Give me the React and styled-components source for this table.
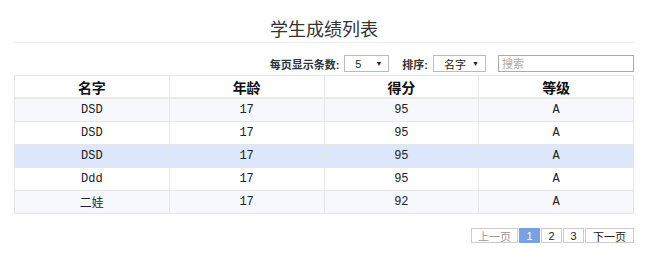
import React, { useState } from 'react';
import styled, { createGlobalStyle } from 'styled-components';

const GlobalStyle = createGlobalStyle`
    body {
        margin: 0;
        background: #fff;
        font-family: "Liberation Sans", "Noto Sans CJK SC", sans-serif;
        color: #333;
    }
`;

const Page = styled.div`
    width: 620px;
    padding: 0 16px 0 14px;
`;

const Title = styled.h2`
    margin: 0;
    padding-top: 19px;
    height: 23px;
    line-height: 23px;
    text-align: center;
    font-size: 18px;
    font-weight: normal;
    color: #333;
    border-bottom: 1px solid #eee;
`;

const Toolbar = styled.div`
    display: flex;
    justify-content: flex-end;
    align-items: center;
    height: 17px;
    margin-top: 12px;
    font-size: 11px;
    font-weight: bold;
    color: #333;
`;

const Label = styled.span`
    margin-right: 5px;
    margin-left: ${props => props.gap || 0}px;
`;

const Select = styled.div`
    box-sizing: border-box;
    width: ${props => props.width}px;
    height: 17px;
    border: 1px solid #bbb;
    display: flex;
    align-items: center;
    justify-content: space-between;
    padding: 0 6px 0 ${props => props.pl}px;
    font-weight: normal;
    font-size: 11px;
    color: #222;
    &::after {
        content: '▼';
        font-size: 7px;
    }
`;

const Search = styled.input`
    box-sizing: border-box;
    width: 136px;
    height: 17px;
    margin-left: 12px;
    border: 1px solid #aaa;
    padding: 0 3px;
    font-size: 11px;
    font-family: inherit;
    &::placeholder {
        color: #aaa;
    }
`;

const Table = styled.table`
    width: 620px;
    margin-top: 3px;
    border-collapse: collapse;
    border: 1px solid #e6e6e6;
    table-layout: fixed;
`;

const Th = styled.th`
    height: 21px;
    border: 1px solid #e6e6e6;
    border-bottom: 2px solid #e9e9e9;
    font-size: 14px;
    font-weight: bold;
    color: #111;
    padding: 0;
`;

const Row = styled.tr`
    background: ${props => (props.hover ? '#dde7fb' : props.odd ? '#f6f8fd' : '#fff')};
`;

const Td = styled.td`
    height: 22px;
    border: 1px solid #e6e6e6;
    text-align: center;
    padding: 0;
    font-family: "Liberation Mono", "Noto Sans CJK SC", monospace;
    font-size: 12px;
    color: #222;
`;

const Pager = styled.div`
    display: flex;
    justify-content: flex-end;
    margin-top: 14px;
    gap: 1px;
`;

const PageButton = styled.span`
    box-sizing: border-box;
    height: 15px;
    width: ${props => props.w}px;
    border: 1px solid #ccc;
    display: flex;
    align-items: center;
    justify-content: center;
    font-size: 11px;
    color: ${props => (props.active ? '#fff' : props.disabled ? '#999' : '#222')};
    background: ${props => (props.active ? '#7aa0e2' : '#fff')};
    border-color: ${props => (props.active ? '#7aa0e2' : '#ccc')};
`;

const rows = [
    { name: 'DSD', age: 17, score: 95, grade: 'A' },
    { name: 'DSD', age: 17, score: 95, grade: 'A' },
    { name: 'DSD', age: 17, score: 95, grade: 'A' },
    { name: 'Ddd', age: 17, score: 95, grade: 'A' },
    { name: '二娃', age: 17, score: 92, grade: 'A' },
];

export default function App() {
    const [hovered] = useState(2);
    return (
        <Page>
            <GlobalStyle />
            <Title>学生成绩列表</Title>
            <Toolbar>
                <Label>每页显示条数:</Label>
                <Select width={45} pl={10}>5</Select>
                <Label gap={13}>排序:</Label>
                <Select width={53} pl={10}>名字</Select>
                <Search placeholder="搜索" />
            </Toolbar>
            <Table>
                <thead>
                    <tr>
                        <Th>名字</Th>
                        <Th>年龄</Th>
                        <Th>得分</Th>
                        <Th>等级</Th>
                    </tr>
                </thead>
                <tbody>
                    {rows.map((r, i) => (
                        <Row key={i} odd={i % 2 === 0} hover={i === hovered}>
                            <Td>{r.name}</Td>
                            <Td>{r.age}</Td>
                            <Td>{r.score}</Td>
                            <Td>{r.grade}</Td>
                        </Row>
                    ))}
                </tbody>
            </Table>
            <Pager>
                <PageButton w={47} disabled>上一页</PageButton>
                <PageButton w={21} active>1</PageButton>
                <PageButton w={21}>2</PageButton>
                <PageButton w={21}>3</PageButton>
                <PageButton w={49}>下一页</PageButton>
            </Pager>
        </Page>
    );
}
